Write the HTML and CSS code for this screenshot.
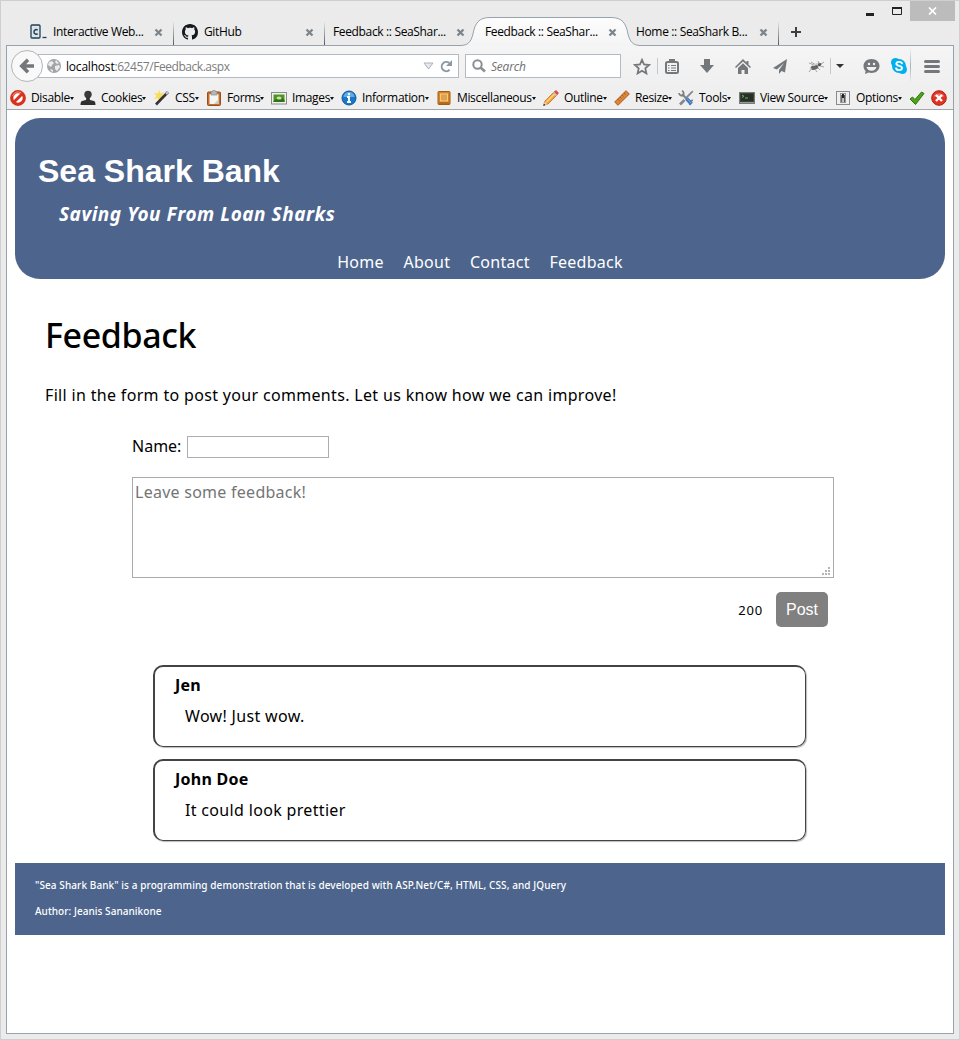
FILE: index.html
```html
<!DOCTYPE html>
<html lang="en">
<head>
<meta charset="utf-8">
<title>Feedback :: SeaShark Bank</title>
<link rel="stylesheet" href="styles.css">
</head>
<body>
<div class="window">
  <div class="caption">
    <svg class="cap-min" width="10" height="3"><rect x="1" width="8" height="3" fill="#222"/></svg>
    <svg class="cap-max" width="12" height="9"><path d="M.5 .5h9v7h-9z" fill="none" stroke="#222"/><path d="M0 1h10" stroke="#222" stroke-width="2"/></svg>
    <span class="cap-close"><svg width="9" height="8"><path d="M1 .5l7 7M8 .5l-7 7" stroke="#fff" stroke-width="1.7"/></svg></span>
  </div>
  <div class="tabs">
    <div class="tab t1">
      <svg width="18" height="16" class="fav"><rect x="1" y="1" width="9" height="13" rx="1" fill="#dbe5ec" stroke="#204056" stroke-width="1.3"/><path d="M7.6 6.2c-1-1-3.6-.8-3.6 1.7s2.600 2.700 3.600 1.700" fill="none" stroke="#204056" stroke-width="1.500"/><path d="M12.500 13.500h4" stroke="#204056" stroke-width="1.300"/></svg>
      <span class="tab-text">Interactive Web...</span><svg class="x" width="9" height="9"><path d="M1.500 1.500l6 6M7.500 1.500l-6 6" stroke="#7c858c" stroke-width="2.300"/></svg>
    </div>
    <div class="tab t2">
      <svg width="16" height="16" class="fav" viewBox="0 0 16 16"><path fill="#15191d" d="M8 0C3.580 0 0 3.580 0 8c0 3.540 2.290 6.530 5.470 7.590.4.070.55-.17.550-.38 0-.19-.01-.82-.01-1.490-2.010.370-2.530-.49-2.690-.94-.09-.23-.48-.94-.82-1.130-.28-.15-.68-.52-.01-.53.630-.01 1.080.580 1.230.820.720 1.210 1.870.870 2.330.660.070-.52.280-.87.510-1.070-1.780-.2-3.640-.89-3.640-3.950 0-.87.310-1.590.820-2.150-.08-.2-.36-1.020.080-2.120 0 0 .67-.21 2.200.820.640-.18 1.320-.27 2-.27s1.360.090 2 .27c1.530-1.040 2.200-.82 2.200-.82.440 1.100.160 1.920.080 2.120.510.560.820 1.270.820 2.150 0 3.070-1.870 3.750-3.650 3.950.290.250.540.730.540 1.480 0 1.070-.01 1.930-.01 2.200 0 .21.150.460.550.380A8.010 8.010 0 0 0 16 8c0-4.420-3.580-8-8-8z"/></svg>
      <span class="tab-text">GitHub</span><svg class="x" width="9" height="9"><path d="M1.500 1.500l6 6M7.500 1.500l-6 6" stroke="#7c858c" stroke-width="2.300"/></svg>
    </div>
    <div class="tab t3">
      <span class="tab-text">Feedback :: SeaShar...</span><svg class="x" width="9" height="9"><path d="M1.500 1.500l6 6M7.500 1.500l-6 6" stroke="#7c858c" stroke-width="2.300"/></svg>
    </div>
    <div class="tab t4">
      <svg class="tab-shape" width="184" height="30"><defs><linearGradient id="tg" x2="0" y2="1"><stop stop-color="#fdfdfd"/><stop offset="1" stop-color="#f4f4f4"/></linearGradient></defs><path d="M2 30V28.500C10 28.500 13 25 15 17C17 6 21 .5 32 .5H153C164 .5 168 6 170 17C172 25 175 28.500 183 28.500V30Z" fill="url(#tg)"/><path d="M0 28.500H2C10 28.500 13 25 15 17C17 6 21 .5 32 .5H153C164 .5 168 6 170 17C172 25 175 28.500 183 28.500" fill="none" stroke="#98a2ac"/></svg>
      <span class="tab-text">Feedback :: SeaShar...</span><svg class="x" width="9" height="9"><path d="M1.500 1.500l6 6M7.500 1.500l-6 6" stroke="#7c858c" stroke-width="2.300"/></svg>
    </div>
    <div class="tab t5">
      <span class="tab-text">Home :: SeaShark B...</span><svg class="x" width="9" height="9"><path d="M1.500 1.500l6 6M7.500 1.500l-6 6" stroke="#7c858c" stroke-width="2.300"/></svg>
    </div>
    <svg class="plus" width="10" height="10"><path d="M5 0v10M0 5h10" stroke="#3c4044" stroke-width="2"/></svg>
  </div>

  <div class="frame">
    <div class="toolbar">
      <svg class="back" width="34" height="34"><circle cx="17" cy="17" r="15.500" fill="#f9f9f9" stroke="#b3b6b9"/><path d="M24 17H13M18 10.800L11.800 17l6.200 6.200" fill="none" stroke="#747779" stroke-width="3.600"/></svg>
      <div class="url">
        <svg width="14" height="14"><circle cx="7" cy="7" r="7" fill="#a2a4a6"/><path d="M2 3l3-1 2 2-2 2-1 2-3-2zM9 1l3 3-2 1-2-2zM8 7l4-1 1 2-3 4-2-2zM3 10l3 1v2l-2-1z" fill="#ececec"/></svg>
        <span class="url-text"><b>localhost</b>:62457/Feedback.aspx</span>
        <svg width="11" height="8"><path d="M1 1h9L5.500 7z" fill="#e5e9ee" stroke="#aab2bc"/></svg>
        <svg class="reload" width="13" height="13"><path d="M9.600 9.800A4.600 4.600 0 1 1 9.200 3" fill="none" stroke="#8b99a7" stroke-width="2"/><path d="M12 0v6H6z" fill="#8b99a7"/></svg>
      </div>
      <div class="search">
        <svg width="14" height="14"><circle cx="5.500" cy="5.500" r="4.200" fill="none" stroke="#8c8f91" stroke-width="2"/><path d="M8.500 8.500l4.500 4" stroke="#8c8f91" stroke-width="2.600"/></svg>
        <span class="search-text">Search</span>
      </div>
      <div class="tools">
        <span class="w30"><svg width="18" height="17"><path d="M9 1.800l2.100 4.700 5 .5-3.800 3.400 1.100 5L9 12.800l-4.400 2.600 1.100-5L1.900 7l5-.5z" fill="none" stroke="#75787b" stroke-width="1.800"/></svg></span>
        <span class="sep"></span>
        <span class="w28"><svg width="14" height="15"><rect x="1" y="3" width="12" height="11" rx="1.500" fill="#f3f3f3" stroke="#75787b" stroke-width="2"/><path d="M4 0h6v4H4z" fill="#75787b"/><path d="M3 6.500h1.500M6 6.500h5M3 9h1.500M6 9h5M3 11.500h1.500M6 11.500h5" stroke="#75787b" stroke-width="1.200"/></svg></span>
        <span class="w42"><svg width="14" height="14"><path d="M4 0h6v6h4l-7 8-7-8h4z" fill="#75787b"/></svg></span>
        <span class="w30"><svg width="16" height="15"><path d="M8 0L0 8l1 1 7-6.500L15 9l1-1-2.500-2.500V2h-2v1.500z" fill="#75787b"/><path d="M3 9l5-4.800L13 9v6H9.500v-4h-3v4H3z" fill="#75787b"/></svg></span>
        <span class="w44"><svg width="14" height="15"><path d="M14 0L0 9l4 1.500L11 4 6 11v4l2.500-3 3.500 1.500z" fill="#75787b"/></svg></span>
        <span class="w28"><svg width="17" height="13"><ellipse cx="6.500" cy="7.500" rx="4" ry="2.200" fill="#666" transform="rotate(-15 6.500 7.500)"/><circle cx="11.500" cy="4.500" r="1.800" fill="#555"/><path d="M1 3l5 2M3 2l5 3M10 1l1 3M13 4l3-2M12 6l4 1M7 9l2 3M4 8l-3 4M10 8l2 2" stroke="#a5a5a5" fill="none"/><path d="M5 5.500l5-2" stroke="#ccc" stroke-width="1.500"/></svg></span>
        <span class="sep"></span>
        <span class="w18"><svg width="8" height="4"><path d="M0 0h8L4 4z" fill="#303335"/></svg></span>
        <span class="w44"><svg width="17" height="15"><path d="M8.500 0C13 0 16.500 2.800 16.500 7S13 14 8.500 14c-1 0-2-.1-2.800-.4L2 15l.6-3C1.200 10.700 .5 9 .5 7 .5 2.800 4 0 8.500 0z" fill="#75787b"/><circle cx="6" cy="5" r="1.200" fill="#f2f2f2"/><circle cx="11" cy="5" r="1.200" fill="#f2f2f2"/><path d="M3.500 8h10c-.5 2.300-2.400 3.800-5 3.800S4 10.300 3.500 8z" fill="#f2f2f2"/></svg></span>
        <span class="w12"><svg width="16" height="16"><circle cx="8" cy="8" r="7" fill="#00aff0"/><circle cx="4.500" cy="4.500" r="4.500" fill="#00aff0"/><circle cx="11.500" cy="11.500" r="4.500" fill="#00aff0"/><path d="M11 5.400C10.300 3.200 5.300 3.300 5.300 5.800c0 2.700 5.700 1.500 5.700 4.300 0 2.700-5.300 2.700-6 .2" fill="none" stroke="#fff" stroke-width="1.900" stroke-linecap="round"/></svg></span>
        <span class="sep tall"></span>
        <span class="w42"><svg width="16" height="13"><path d="M1.500 1.500h13M1.500 6.500h13M1.500 11.500h13" stroke="#75787b" stroke-width="3" stroke-linecap="round"/></svg></span>
      </div>
    </div>

    <div class="devbar">
      <div class="dev i70"><svg width="16" height="16"><circle cx="8" cy="8" r="6.300" fill="#fff" stroke="#d8311d" stroke-width="3.200"/><path d="M12.500 3.500l-9 9" stroke="#d8311d" stroke-width="3"/><path d="M2.500 6a6 6 0 0 1 9-3" fill="none" stroke="#f58a75"/></svg><span>Disable</span><i></i></div>
      <div class="dev i74"><svg width="16" height="16"><circle cx="8" cy="4.500" r="3.700" fill="#3a3a3a"/><path d="M6.500 7h3l.5 3 4 1c1 .4 1.500 1.500 1.500 4H.5c0-2.500.5-3.600 1.500-4l4-1z" fill="#303030"/></svg><span>Cookies</span><i></i></div>
      <div class="dev i52"><svg width="16" height="16"><path d="M5 0l1.400 3.500L10 2 8 5.200l3 2.300-4 .3L6 12 4 8.300 0 9l2.600-3L0 3l4 .6z" fill="#f8dd55"/><path d="M2 14.500L14 2" stroke="#343434" stroke-width="2.600"/><path d="M12 4l2.500-2.500" stroke="#c9c9c9" stroke-width="2"/></svg><span>CSS</span><i></i></div>
      <div class="dev i65"><svg width="16" height="16"><rect x="1.500" y="2" width="13" height="13.500" rx="1" fill="#c66f2c" stroke="#9c4d14"/><path d="M3.500 4h9v10h-9z" fill="#f5f5f3"/><path d="M12.500 9.500V14H8z" fill="#c9c9c9"/><path d="M5 1.500h1.500a1.500 1.500 0 0 1 3 0H11V5H5z" fill="#b6b7b8" stroke="#7e7f80" stroke-width=".6"/></svg><span>Forms</span><i></i></div>
      <div class="dev i70"><svg width="16" height="16"><rect x=".5" y="2.500" width="15" height="11.500" fill="#f2f2ea" stroke="#8b8c83"/><rect x="2.500" y="4.500" width="11" height="7.500" fill="#4d9427"/><path d="M2.500 11l4-3 3 2 2-2 2 2v2h-11z" fill="#2e711d"/><ellipse cx="8" cy="8" rx="2.500" ry="1.600" fill="#cfe29a"/></svg><span>Images</span><i></i></div>
      <div class="dev i95"><svg width="16" height="16"><circle cx="8" cy="8" r="7" fill="#1976c8" stroke="#1158a0"/><path d="M2.500 7a5.500 5 0 0 1 11 0z" fill="#61ace7"/><path d="M8 3v2.200M6 7h2v5M6 12h4" fill="none" stroke="#fff" stroke-width="1.900"/></svg><span>Information</span><i></i></div>
      <div class="dev i107"><svg width="16" height="16"><rect x="2" y="1.500" width="12" height="13" rx=".8" fill="#d4872a" stroke="#a25c13"/><rect x="4.500" y="4" width="7" height="7" fill="#e3a04a" stroke="#f6ca7d"/><path d="M3 13h10" stroke="#8f5010"/></svg><span>Miscellaneous</span><i></i></div>
      <div class="dev i71"><svg width="16" height="16"><path d="M.5 15.500L2 11 11.500 1.500l3 3L5 14z" fill="#f3a13a" stroke="#b8641d" stroke-width=".7"/><path d="M3.500 12L12 3.500" stroke="#ffda80" stroke-width="1.200"/><path d="M11 2l2-2 3 3-2 2z" fill="#df4c4c"/><path d="M10 3l3 3 1-1-3-3z" fill="#c3c3c3"/><path d="M.5 15.500L1.800 11.700 4.400 14.200z" fill="#f2d9ad"/><path d="M.3 15.700l.7-2 1.500 1.300z" fill="#222"/></svg><span>Outline</span><i></i></div>
      <div class="dev i64"><svg width="16" height="16"><path d="M.7 12L12 .7 15.300 4 4 15.300z" fill="#d9863b" stroke="#ab5b1c"/><path d="M4 9l1.500 1.500M6 7l1.500 1.500M8 5l1.500 1.500M10 3l1.500 1.500" stroke="#a55f22"/></svg><span>Resize</span><i></i></div>
      <div class="dev i61"><svg width="16" height="16"><path d="M4 4l9 9.500" stroke="#85888b" stroke-width="2.300"/><path d="M1 3a3 3 0 0 0 4 2.500A3 3 0 0 0 4 .8M12 15a3 3 0 0 1 3-4.500" fill="none" stroke="#7c8083" stroke-width="1.700"/><path d="M14.800 1.200L8 8" stroke="#898c8f" stroke-width="1.800"/><path d="M6.500 10L2 14.500" stroke="#85888b" stroke-width="2.600"/><path d="M8.500 8.500l5 5.500" stroke="#3c78c0" stroke-width="3.600"/><path d="M9 8.500l4.500 5" stroke="#76aae3"/></svg><span>Tools</span><i></i></div>
      <div class="dev i96"><svg width="16" height="16"><rect x=".5" y="2.500" width="15" height="11" fill="#3c413c" stroke="#777d76"/><path d="M2 4h12v7H2z" fill="#263127"/><path d="M3 5l2 1.300L3 7.500M6 8h3" stroke="#6cb64e" fill="none"/><path d="M1 12.500h14" stroke="#999"/></svg><span>View Source</span><i></i></div>
      <div class="dev i74"><svg width="16" height="16"><rect x="1.500" y="1.500" width="13" height="13" fill="#efefef" stroke="#8b8b8b"/><rect x="5.500" y="3.500" width="5" height="9" fill="#eee" stroke="#999"/><path d="M6.800 5V12M9.300 5V12" stroke="#333"/><path d="M8 4v4" stroke="#222" stroke-width="2"/></svg><span>Options</span><i></i></div>
      <div class="dev i22"><svg width="16" height="16"><path d="M1 9l2.500-2L6 9.500 12.500 2 15 3.500 6.500 14.500z" fill="#4fa31b" stroke="#2e7510"/></svg></div>
      <div class="dev"><svg width="16" height="16"><circle cx="8" cy="8" r="7.300" fill="#df3222" stroke="#b91e12"/><path d="M2.500 6.500a6 5 0 0 1 11 0z" fill="#f2796a"/><path d="M5 5l6 6M11 5l-6 6" stroke="#fff" stroke-width="2.400"/></svg></div>
    </div>

    <div class="page">
      <header class="banner">
        <h1 class="brand">Sea Shark Bank</h1>
        <p class="slogan">Saving You From Loan Sharks</p>
        <nav class="nav"><a>Home</a><a>About</a><a>Contact</a><a>Feedback</a></nav>
      </header>
      <main class="content">
        <h2 class="title">Feedback</h2>
        <p class="intro">Fill in the form to post your comments. Let us know how we can improve!</p>
        <form class="form">
          <div class="name-row"><label class="name-label" for="name">Name:</label><input class="name" id="name" type="text"></div>
          <div class="box"><span class="hint">Leave some feedback!</span>
            <svg class="grip" width="8" height="8" fill="#b5b5b5"><path d="M6 0h2v2H6zM3 3h2v2H3zM6 3h2v2H6zM0 6h2v2H0zM3 6h2v2H3zM6 6h2v2H6z"/></svg></div>
          <div class="post-row"><span class="count">200</span><button class="post" type="button">Post</button></div>
        </form>
        <section class="comments">
          <article class="comment"><h3 class="who">Jen</h3><p class="said">Wow! Just wow.</p></article>
          <article class="comment"><h3 class="who">John Doe</h3><p class="said">It could look prettier</p></article>
        </section>
      </main>
      <footer class="footer">
        <p class="about">"Sea Shark Bank" is a programming demonstration that is developed with ASP.Net/C#, HTML, CSS, and JQuery</p>
        <p class="author">Author: Jeanis Sananikone</p>
      </footer>
    </div>
  </div>
</div>
</body>
</html>
```

FILE: styles.css
```css
* { box-sizing: border-box; }
body { margin: 0; font-family: "Noto Sans", sans-serif; color: #000; }
h1, h2, h3, p { margin: 0; }
svg { display: block; flex: none; }

.window { width: 960px; height: 1040px; background: #ebebeb; border: 1px solid #cfcfcf; padding: 0 5px; overflow: hidden; }

/* Window caption */
.caption { height: 20px; display: flex; justify-content: flex-end; align-items: flex-start; margin-right: -1px; }
.cap-min { margin: 12px 17px 0 0; }
.cap-max { margin: 6px 6px 0 0; }
.cap-close { width: 45px; height: 20px; background: #bcbcbc; display: flex; align-items: center; justify-content: center; }

/* Tab strip */
.tabs { height: 24px; display: flex; padding-left: 16px; font: 12px/22px "Open Sans", sans-serif; }
.tab { position: relative; width: 151px; height: 24px; padding: 0 11px 2px 8px; display: flex; align-items: center; }
.t1, .t2, .t5 { background: linear-gradient(#ebebeb, #4f5a68) right / 1px 100% no-repeat; }
.t1, .t4 { width: 152px; }
.t4 { padding-left: 9px; }
.tab-text { position: relative; flex: 1; white-space: nowrap; letter-spacing: -.35px; }
.fav { margin-right: 5px; }
.t2 .fav { margin-right: 6px; }
.x { position: relative; }
.tab-shape { position: absolute; left: -18px; top: -4px; z-index: 1; }
.t4 .tab-text, .t4 .x { z-index: 2; }
.plus { margin: 6px 0 0 12px; }

/* Browser toolbars */
.frame { height: 989px; border: 1px solid #98a2ac; background: #fff; }
.toolbar { height: 42px; background: linear-gradient(#f5f5f5, #efefef); display: flex; align-items: center; padding: 0 0 2px 3px; }
.back { position: relative; z-index: 1; }
.url { width: 421px; height: 24px; margin: 0 6px 0 -6px; padding: 0 5px 0 8px; background: #fff; border: 1px solid #b2bac3; display: flex; align-items: center; }
.url-text { flex: 1; margin-left: 5px; font: 12px "Open Sans", sans-serif; color: #7c7c7c; letter-spacing: -.45px; }
.url-text b { font-weight: 400; color: #000; letter-spacing: -.2px; }
.reload { margin-left: 6px; }
.search { width: 156px; height: 24px; background: #fff; border: 1px solid #b2bac3; display: flex; align-items: center; padding-left: 6px; margin-right: 6px; }
.search-text { margin-left: 5px; font: italic 12px "Open Sans", sans-serif; color: #707070; letter-spacing: -.2px; }
.tools { display: flex; height: 40px; align-items: center; }
.tools span { display: flex; justify-content: center; align-items: center; }
.tools .sep { width: 1px; height: 16px; background: #c6c9cc; }
.tools .tall { height: 36px; margin-left: 5px; background: linear-gradient(#f2f2f2, #a8b2bc, #f2f2f2); }
.w12 { width: 12px; } .w18 { width: 18px; } .w28 { width: 28px; } .w30 { width: 30px; } .w42 { width: 42px; } .w44 { width: 44px; }

.devbar { height: 22px; background: #efefef; border-bottom: 1px solid #a3a6a9; display: flex; align-items: center; padding: 0 0 2px 3px; font: 12px/18px "Open Sans", sans-serif; }
.dev { display: flex; align-items: center; white-space: nowrap; letter-spacing: -.35px; }
.dev span { margin-left: 5px; }
.dev i { border: 2px solid transparent; border-top: 3px solid #111; border-bottom: 0; margin-top: 1px; }
.i22 { width: 22px; } .i52 { width: 52px; } .i61 { width: 61px; } .i64 { width: 64px; } .i65 { width: 65px; }
.i70 { width: 70px; } .i71 { width: 71px; } .i74 { width: 74px; } .i95 { width: 95px; } .i96 { width: 96px; } .i107 { width: 107px; }

/* Web page */
.page { padding: 8px; }
.banner { height: 161px; border-radius: 25px; background: #4d658d; color: #fff; padding: 34px 23px 0; }
.brand { font: bold 32px/38px "Liberation Sans", Arial, sans-serif; }
.slogan { margin: 10px 0 0 21px; font-size: 19px; font-weight: 700; font-style: italic; line-height: 28px; letter-spacing: .53px; }
.nav { display: flex; justify-content: center; gap: 19.7px; margin-top: 22px; font-size: 16px; line-height: 24px; letter-spacing: .27px; }

.content { padding: 34px 30px 0; height: 584px; }
.title { font-size: 34px; line-height: 44px; font-weight: 500; letter-spacing: -.4px; }
.intro { margin-top: 26px; font-size: 16px; line-height: 24px; letter-spacing: .33px; }
.form { width: 702px; margin: 29px 0 0 87px; }
.name-row { display: flex; align-items: center; height: 22px; font-size: 16px; }
.name-label { width: 55px; line-height: 22px; padding-bottom: 2px; }
.name { width: 142px; height: 22px; border: 1px solid #abadb3; padding: 1px; background: #fff; }
.box { position: relative; margin-top: 19px; height: 101px; border: 1px solid #a9a9ae; padding: 2px; font-size: 16px; line-height: 24px; color: #757575; letter-spacing: .26px; }
.grip { position: absolute; right: 3px; bottom: 2px; }
.post-row { display: flex; justify-content: flex-end; align-items: center; margin-top: 14px; padding-right: 6px; }
.count { font-size: 13px; letter-spacing: .8px; margin-right: 13px; }
.post { width: 52px; height: 35px; border: 0; border-radius: 5px; background: #808080; color: #fff; font: 16px "Liberation Sans", Arial, sans-serif; padding: 0; }
.comments { margin: 38px 0 0 108px; width: 653px; display: flex; flex-direction: column; gap: 12px; }
.comment { height: 82px; border: solid #444; border-width: 2px 1px 1px 2px; border-radius: 10px; box-shadow: 1px 1px 1px #bbb; padding: 6px 20px; line-height: 24px; font-size: 16px; }
.who { font-size: 16px; font-weight: 700; letter-spacing: .25px; }
.said { margin: 7px 0 0 10px; letter-spacing: .33px; }

.footer { height: 72px; background: #4d658d; color: #fff; padding: 14px 20px; font-size: 10px; line-height: 16px; font-weight: 500; letter-spacing: .09px; }
.author { margin-top: 10px; letter-spacing: .05px; }
```
